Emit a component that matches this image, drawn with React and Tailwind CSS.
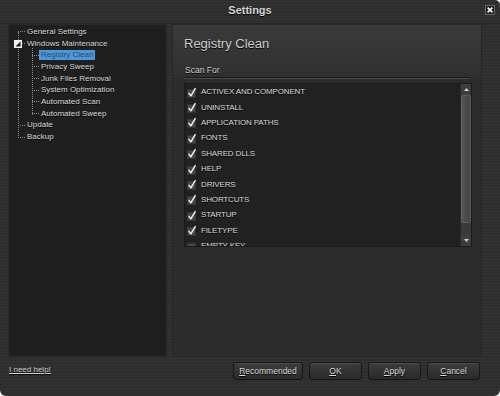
import React from 'react';

const scanItems = [
  { label: 'ACTIVEX AND COMPONENT', checked: true },
  { label: 'UNINSTALL', checked: true },
  { label: 'APPLICATION PATHS', checked: true },
  { label: 'FONTS', checked: true },
  { label: 'SHARED DLLS', checked: true },
  { label: 'HELP', checked: true },
  { label: 'DRIVERS', checked: true },
  { label: 'SHORTCUTS', checked: true },
  { label: 'STARTUP', checked: true },
  { label: 'FILETYPE', checked: true },
  { label: 'EMPTY KEY', checked: false },
];

const maintenance = [
  'Registry Clean',
  'Privacy Sweep',
  'Junk Files Removal',
  'System Optimization',
  'Automated Scan',
  'Automated Sweep',
];

function CheckBox({ checked }) {
  return (
    <svg width="10" height="11" viewBox="0 0 10 11" className="shrink-0 overflow-visible">
      <rect x="0.5" y="2.5" width="8" height="8" fill="#474747" stroke="#333333" />
      {checked && (
        <path d="M2 6.4 L3.9 8.8 L8.2 1.6" fill="none" stroke="#ececec" strokeWidth="1.5" strokeLinecap="round" strokeLinejoin="round" />
      )}
    </svg>
  );
}

function Button({ children, width }) {
  return (
    <button
      className={`${width} h-[18px] rounded-[3px] border border-[#151515] bg-gradient-to-b from-[#3c3c3c] to-[#2a2a2a] shadow-[inset_0_1px_0_#4c4c4c] text-[8.5px] leading-none text-[#dcdcdc] [text-shadow:0_1px_0_#000]`}
    >
      {children}
    </button>
  );
}

export default function App() {
  return (
    <div className="w-[500px] h-[396px] bg-white font-['Liberation_Sans',Arial,sans-serif]">
      <div className="h-full flex flex-col rounded-tr-[5px] rounded-b-[6px] overflow-hidden bg-[repeating-linear-gradient(0deg,#2f2f2f_0px,#2f2f2f_1px,#333333_1px,#333333_2px,#2d2d2d_2px,#2d2d2d_3px)]">
        {/* Title bar */}
        <div className="relative h-[24px] shrink-0 flex items-center justify-center pb-[2px] border-b border-[#242424]">
          <span className="text-[11px] font-bold text-[#d6d6d6] [text-shadow:0_1px_0_#000]">Settings</span>
          <svg width="10" height="10" viewBox="0 0 10 10" className="absolute right-[5px] top-[5px]">
            <rect x="0.5" y="0.5" width="9" height="9" fill="#1c1c1c" stroke="#6a6a6a" />
            <path d="M2.6 2.6 L7.4 7.4 M7.4 2.6 L2.6 7.4" stroke="#ffffff" strokeWidth="1.6" />
          </svg>
        </div>

        {/* Panels */}
        <div className="h-[333px] shrink-0 flex gap-[5px] pl-[8px]">
          {/* Tree */}
          <div className="relative w-[159px] h-full pt-[1px] bg-[#1f1f1f] border border-[#2a2a2a] text-[8px] text-[#dadada] [text-shadow:0_1px_0_#000]">
            <span className="absolute left-[9px] top-[7px] h-[106px] border-l border-dotted border-[#8a8a8a]" />
            <span className="absolute left-[23px] top-[19px] h-[71px] border-l border-dotted border-[#8a8a8a]" />
            <div className="relative flex items-center h-[11.7px] pl-[9px]">
              <span className="w-[7px] border-t border-dotted border-[#8a8a8a]" />
              <span className="ml-[2px]">General Settings</span>
            </div>
            <div className="relative flex items-center h-[11.7px] pl-[9px]">
              <span className="w-[7px] border-t border-dotted border-[#8a8a8a]" />
              <span className="ml-[2px]">Windows Maintenance</span>
              <svg width="8" height="8" viewBox="0 0 8 8" className="absolute left-[5px] top-[2px]">
                <rect x="0" y="0" width="8" height="8" fill="#f4f4f4" />
                <path d="M6.5 1.5 L6.5 6.5 L1.5 6.5 Z" fill="#1a1a1a" />
              </svg>
            </div>
            {maintenance.map((item, i) => (
              <div key={item} className="flex items-center h-[11.7px] pl-[23px]">
                <span className="w-[7px] border-t border-dotted border-[#8a8a8a]" />
                {i === 0 ? (
                  <span className="px-[2px] h-[10px] leading-[10px] bg-[#4f97d6] text-[#1b4a7e] [text-shadow:none]">{item}</span>
                ) : (
                  <span className="ml-[2px]">{item}</span>
                )}
              </div>
            ))}
            <div className="flex items-center h-[11.7px] pl-[9px]">
              <span className="w-[7px] border-t border-dotted border-[#8a8a8a]" />
              <span className="ml-[2px]">Update</span>
            </div>
            <div className="flex items-center h-[11.7px] pl-[9px]">
              <span className="w-[7px] border-t border-dotted border-[#8a8a8a]" />
              <span className="ml-[2px]">Backup</span>
            </div>
          </div>

          {/* Right panel */}
          <div className="w-[310px] h-full border border-[#262626] bg-[linear-gradient(180deg,#3a3a3a_0px,#303030_50px,#2c2c2c_54px,#2c2c2c_100%)] px-[11px] pt-[11px]">
            <div className="h-[16px] leading-[16px] text-[13px] text-[#cfcfcf] [text-shadow:0_1px_0_#000]">Registry Clean</div>
            <div className="mt-[13px] h-[11px] leading-[11px] pl-[1px] text-[8.5px] text-[#cfcfcf] [text-shadow:0_1px_0_#000]">Scan For</div>
            <div className="mt-[1px] h-[2px] border-t border-[#1a1a1a] border-b border-b-[#4a4a4a]" />
            <div className="mt-[4px] w-[288px] h-[164px] flex border border-[#1a1a1a] bg-[#212121]">
              <div className="flex-1 overflow-hidden">
                {scanItems.map((s) => (
                  <div key={s.label} className="flex items-center gap-[4px] h-[15.4px] pl-[2px] pt-[1px]">
                    <CheckBox checked={s.checked} />
                    <span className="text-[8px] tracking-[-0.15px] text-[#dadada] [text-shadow:0_1px_0_#000]">{s.label}</span>
                  </div>
                ))}
              </div>
              {/* Scrollbar */}
              <div className="w-[11px] h-full flex flex-col bg-[#3a3a3a] border-l border-[#2a2a2a]">
                <div className="h-[11px] flex items-center justify-center bg-[#3e3e3e]">
                  <svg width="5" height="3" viewBox="0 0 5 3"><path d="M0 3 L2.5 0 L5 3 Z" fill="#cfcfcf" /></svg>
                </div>
                <div className="h-[128px] rounded-[2px] bg-[linear-gradient(90deg,#555555,#4a4a4a_50%,#444444)] border border-[#5e5e5e]" />
                <div className="flex-1" />
                <div className="h-[11px] flex items-center justify-center bg-[#3e3e3e]">
                  <svg width="5" height="3" viewBox="0 0 5 3"><path d="M0 0 L2.5 3 L5 0 Z" fill="#cfcfcf" /></svg>
                </div>
              </div>
            </div>
          </div>
        </div>

        {/* Footer */}
        <div className="flex-1 flex items-start pt-[5px] pl-[9px] pr-[20px]">
          <a className="mt-[3px] h-[10px] leading-[10px] text-[8px] text-[#d6d6d6] underline [text-shadow:0_1px_0_#000]">I need help!</a>
          <div className="ml-auto flex gap-[6px]">
            <Button width="w-[70px]"><span className="underline">R</span>ecommended</Button>
            <Button width="w-[53px]"><span className="underline">O</span>K</Button>
            <Button width="w-[53px]"><span className="underline">A</span>pply</Button>
            <Button width="w-[53px]"><span className="underline">C</span>ancel</Button>
          </div>
        </div>
      </div>
    </div>
  );
}
